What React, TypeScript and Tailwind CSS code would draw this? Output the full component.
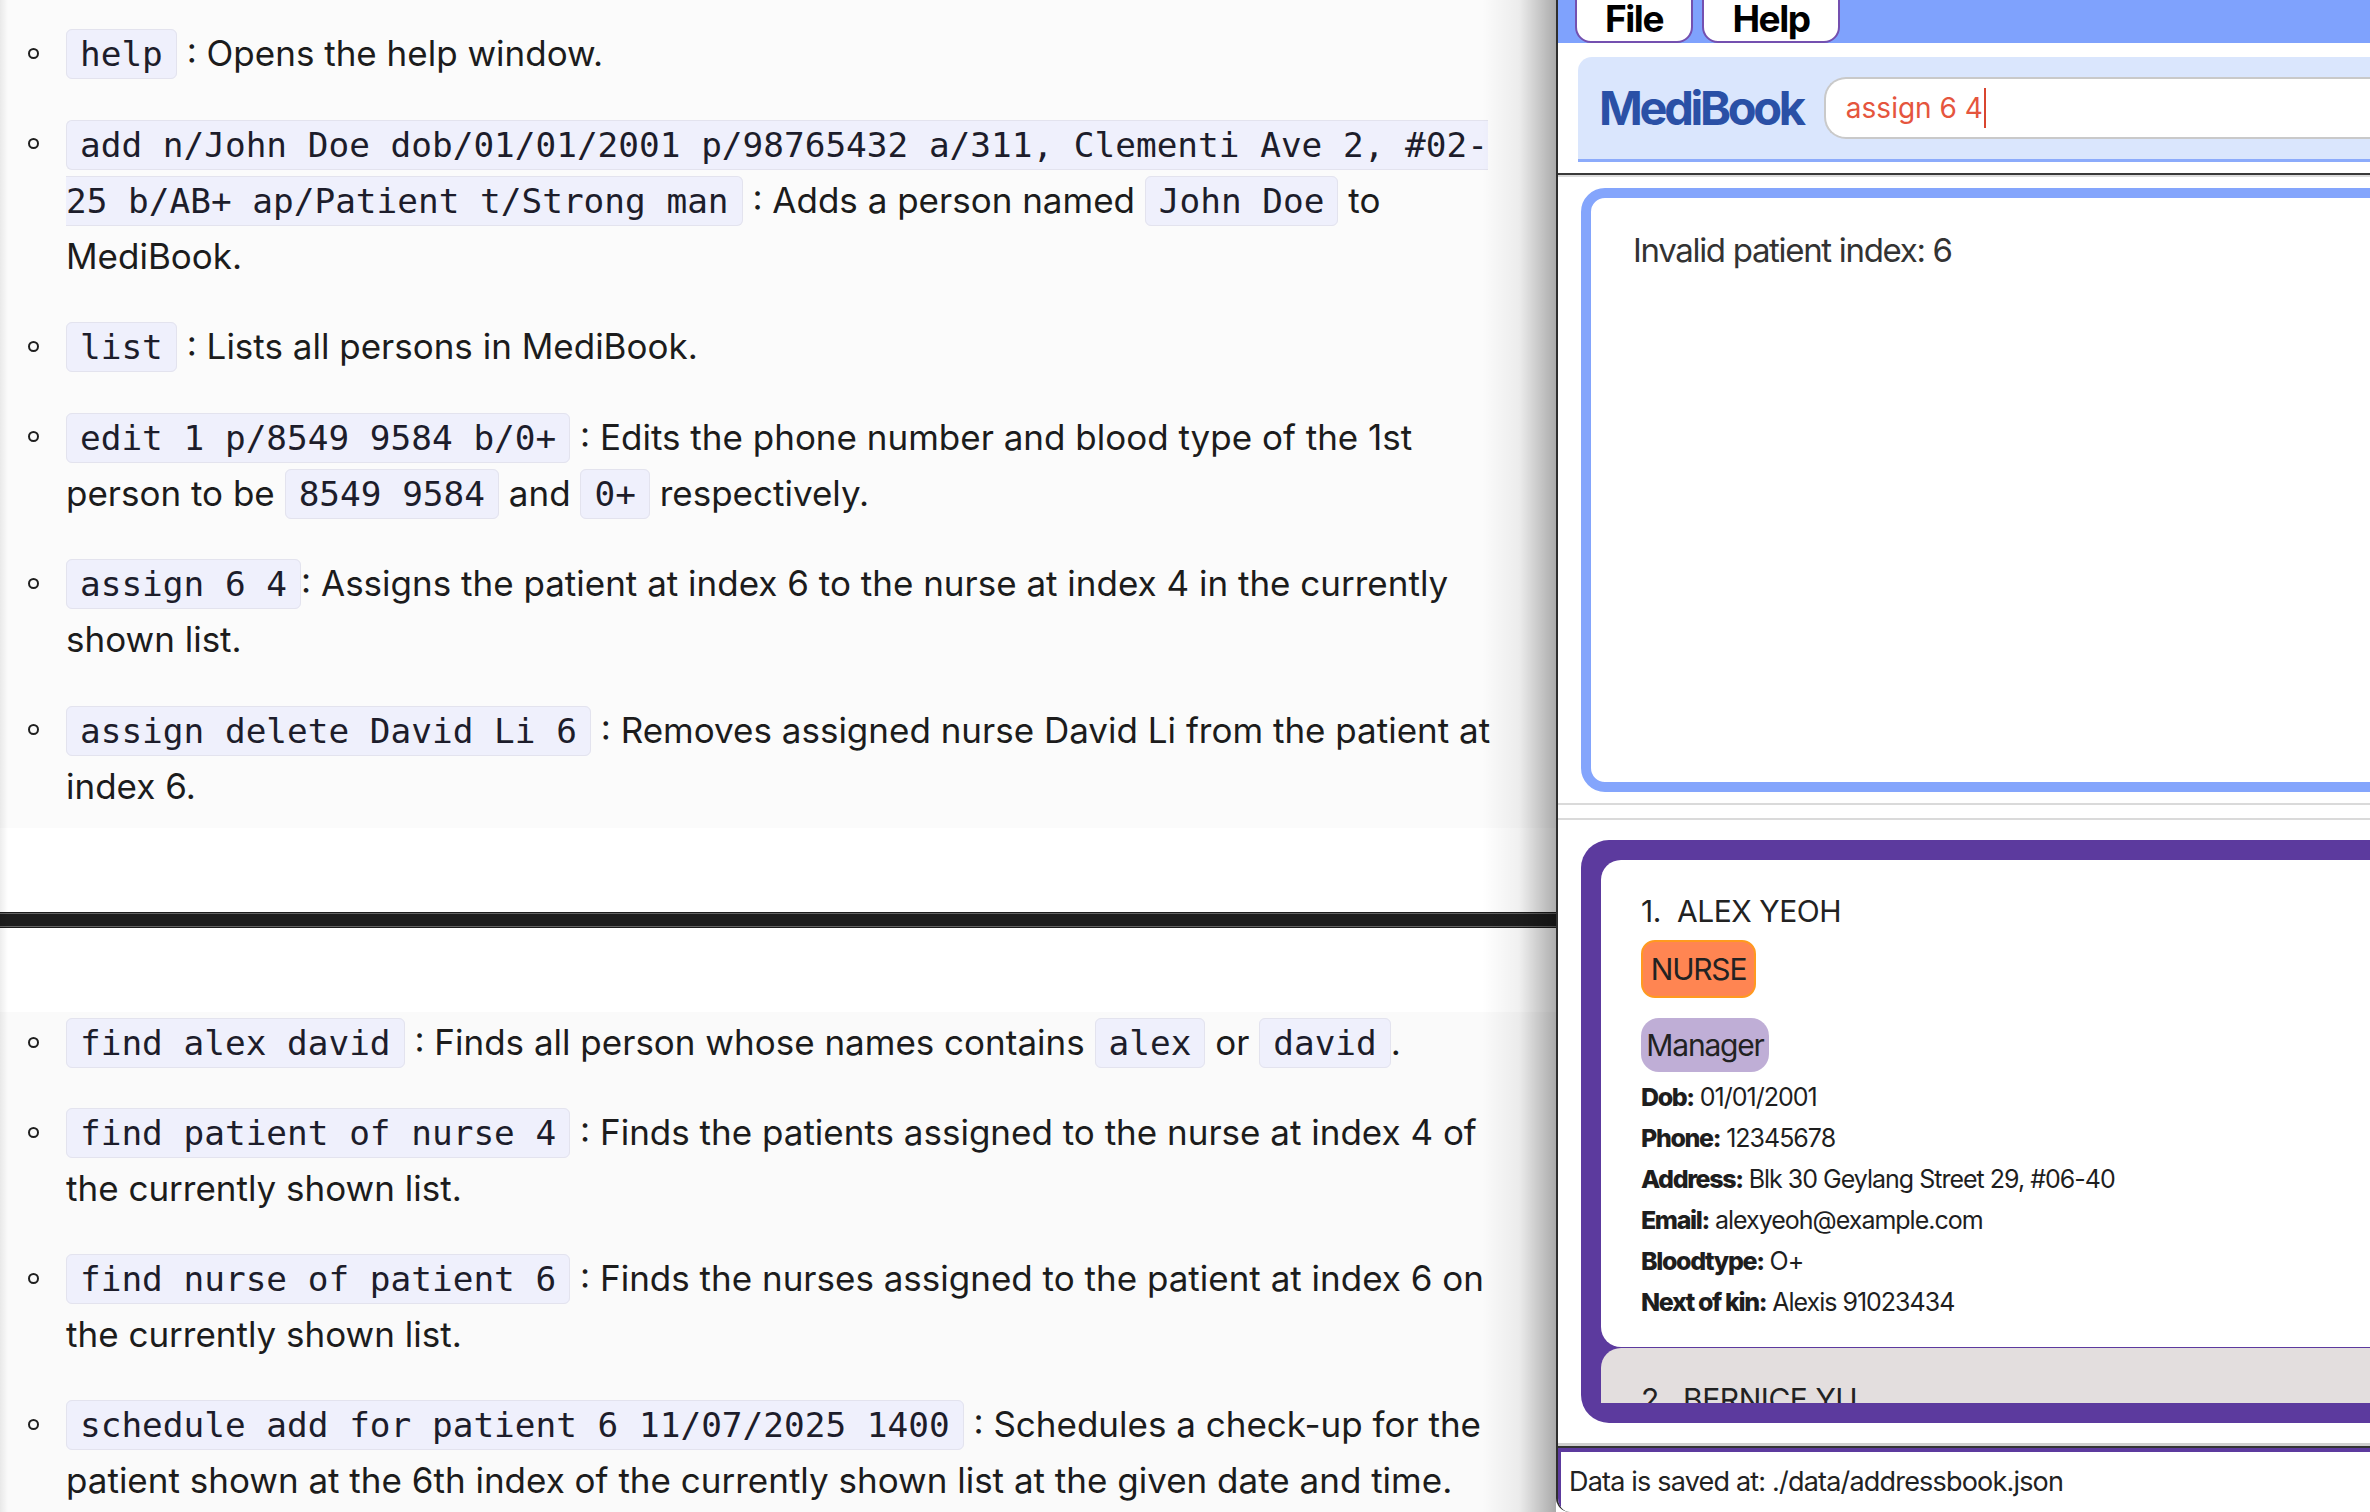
import React from "react";

function Code({ children }: { children: React.ReactNode }) {
  return (
    <code className="font-['DejaVu_Sans_Mono',monospace] text-[34.4px] leading-none tracking-normal text-[#1d1d2b] bg-[#eff0fc] border-[1.5px] border-[#e3e3ee] rounded-[6px] px-[13px] py-[4px]">
      {children}
    </code>
  );
}

function Item({ children, gap }: { children: React.ReactNode; gap?: string }) {
  return (
    <li className={`flex ${gap ?? ""}`}>
      <div className="w-[66px] h-[56px] shrink-0 flex items-center justify-center">
        <span className="w-[11px] h-[11px] rounded-full border-2 border-[#1f1f1f]" />
      </div>
      <div className="whitespace-nowrap">{children}</div>
    </li>
  );
}

function GuidePane() {
  return (
    <div className="relative w-[1556px] shrink-0 h-full bg-white font-['Inter',sans-serif] text-[35px] leading-[56px] text-[#1c1c1c]">
      <section className="h-[828px] bg-[#fbfbfb] pt-[25px]">
        <ul>
          <Item>
            <Code>help</Code> : Opens the help window.
          </Item>
          <Item gap="mt-[34.5px]">
            <Code>
              add n/John Doe dob/01/01/2001 p/98765432 a/311, Clementi Ave 2, #02-
              <br />
              25 b/AB+ ap/Patient t/Strong man
            </Code>{" "}
            : Adds a person named <Code>John Doe</Code> to
            <br />
            MediBook.
          </Item>
          <Item gap="mt-[34.5px]">
            <Code>list</Code> : Lists all persons in MediBook.
          </Item>
          <Item gap="mt-[34.5px]">
            <Code>edit 1 p/8549 9584 b/0+</Code> : Edits the phone number and blood type of the 1st
            <br />
            person to be <Code>8549 9584</Code> and <Code>0+</Code> respectively.
          </Item>
          <Item gap="mt-[34.5px]">
            <Code>assign 6 4</Code>: Assigns the patient at index 6 to the nurse at index 4 in the currently
            <br />
            shown list.
          </Item>
          <Item gap="mt-[34.5px]">
            <Code>assign delete David Li 6</Code> : Removes assigned nurse David Li from the patient at
            <br />
            index 6.
          </Item>
        </ul>
      </section>

      <div className="h-[84px]" />
      <div className="h-[16px] bg-[#1d1d1d] py-[1px]">
        <div className="h-full border-y-[1.5px] border-[#646464]" />
      </div>
      <div className="h-[84px]" />

      <section className="h-[500px] bg-[#fafafa] pt-[2px]">
        <ul>
          <Item>
            <Code>find alex david</Code> : Finds all person whose names contains <Code>alex</Code> or{" "}
            <Code>david</Code>.
          </Item>
          <Item gap="mt-[34px]">
            <Code>find patient of nurse 4</Code> : Finds the patients assigned to the nurse at index 4 of
            <br />
            the currently shown list.
          </Item>
          <Item gap="mt-[34px]">
            <Code>find nurse of patient 6</Code> : Finds the nurses assigned to the patient at index 6 on
            <br />
            the currently shown list.
          </Item>
          <Item gap="mt-[34px]">
            <Code>schedule add for patient 6 11/07/2025 1400</Code> : Schedules a check-up for the
            <br />
            patient shown at the 6th index of the currently shown list at the given date and time.
          </Item>
        </ul>
      </section>

      {/* window shadow falling on the guide */}
      <div className="absolute right-0 top-0 h-full w-[74px] bg-linear-to-r from-[#00000000] via-[#0000000f] to-[#00000052]" />
      <div className="absolute left-0 top-0 h-full w-[8px] bg-linear-to-r from-[#00000012] to-[#00000000]" />
    </div>
  );
}

function Field({ label, value }: { label: string; value: string }) {
  return (
    <div className="h-[41px] leading-[41px] text-[25px] text-[#1e1e1e] tracking-[-0.04em]">
      <span className="font-extrabold tracking-[-0.055em]">{label}</span> {value}
    </div>
  );
}

function AppWindow() {
  return (
    <div className="flex-1 h-full flex flex-col bg-white border-l-2 border-[#2e2e2e] rounded-bl-[14px] overflow-hidden font-['Inter',sans-serif] text-[#222]">
      {/* menu bar */}
      <div className="h-[43px] shrink-0 bg-[#7fa2fd] flex items-end gap-[9px] pl-[17px] overflow-hidden">
        <button className="w-[118px] h-[58px] shrink-0 bg-white border-[2.5px] border-[#7450b0] rounded-[16px] pt-[8px] text-[37px] leading-none font-bold text-black tracking-[-0.04em]">
          File
        </button>
        <button className="w-[138px] h-[58px] shrink-0 bg-white border-[2.5px] border-[#7450b0] rounded-[16px] pt-[8px] text-[37px] leading-none font-bold text-black tracking-[-0.04em]">
          Help
        </button>
      </div>

      {/* command box */}
      <div className="mt-[14px] ml-[20px] h-[105px] shrink-0 bg-[#dae6fd] rounded-tl-[14px] border-b-[3px] border-[#8cabfb] flex items-center pl-[21px] gap-[21px]">
        <span className="text-[47px] font-bold text-[#2a50a6] tracking-[-0.07em]">MediBook</span>
        <div className="flex-1 h-[62px] flex items-center rounded-l-[22px] border-2 border-r-0 border-[#c9c9c9] bg-white pl-[20px] text-[28px] text-[#e5553d]">
          assign 6 4
          <span className="inline-block w-[2px] h-[40px] ml-[1px] bg-[#d9452f]" />
        </div>
      </div>

      <div className="mt-[11px] h-[2px] shrink-0 bg-[#3a3a3a]" />
      <div className="h-[2px] shrink-0 bg-[#dcdcdc]" />

      {/* result display */}
      <div className="mt-[11px] ml-[23px] -mr-[40px] h-[604px] shrink-0 border-[10px] border-[#84a5fc] rounded-[24px] bg-white pl-[42px] pt-[32px]">
        <div className="text-[33px] leading-[40px] text-[#333] tracking-[-0.04em]">Invalid patient index: 6</div>
      </div>

      <div className="mt-[11px] h-[2px] shrink-0 bg-[#dadada]" />
      <div className="mt-[13px] h-[2px] shrink-0 bg-[#dadada]" />

      {/* person list */}
      <div className="mt-[20px] ml-[23px] -mr-[40px] h-[583px] shrink-0 bg-[#5c3a9e] rounded-[28px] p-[20px]">
        <div className="h-full overflow-hidden flex flex-col gap-[1px]">
          <div className="h-[487px] shrink-0 bg-white rounded-l-[20px] pl-[40px] pt-[33px]">
            <div className="text-[30px] leading-[36px] whitespace-pre tracking-[-0.015em]">1.  ALEX YEOH</div>
            <div className="mt-[11px] w-[115px] h-[58px] flex items-center justify-center rounded-[14px] bg-[#ff8552] border-2 border-[#ff9a1f] text-[30px] text-[#222] tracking-[-0.04em]">
              NURSE
            </div>
            <div className="mt-[20px] w-[128px] h-[54px] flex items-center justify-center rounded-[18px] bg-[#bfaed6] text-[30px] text-[#222] tracking-[-0.04em]">
              Manager
            </div>
            <div className="mt-[5px]">
              <Field label="Dob:" value="01/01/2001" />
              <Field label="Phone:" value="12345678" />
              <Field label="Address:" value="Blk 30 Geylang Street 29, #06-40" />
              <Field label="Email:" value="alexyeoh@example.com" />
              <Field label="Bloodtype:" value="O+" />
              <Field label="Next of kin:" value="Alexis 91023434" />
            </div>
          </div>
          <div className="h-[200px] shrink-0 bg-[#e3dede] rounded-tl-[20px] pl-[40px] pt-[33px]">
            <div className="text-[30px] leading-[36px] whitespace-pre tracking-[-0.015em]">2.  BERNICE YU</div>
          </div>
        </div>
      </div>

      {/* status bar */}
      <div className="mt-[20px] h-[3px] shrink-0 bg-[#cfcfcf]" />
      <div className="h-[2px] shrink-0 bg-[#333]" />
      <div className="h-[4px] shrink-0 bg-[#5c3a9e]" />
      <div className="flex-1 border-l-[3px] border-[#5c3a9e] pl-[8px] flex items-center text-[27px] text-[#222] tracking-[-0.03em]">
        Data is saved at: ./data/addressbook.json
      </div>
    </div>
  );
}

export default function App() {
  return (
    <div className="flex w-[2370px] h-[1512px] overflow-hidden bg-white">
      <GuidePane />
      <AppWindow />
    </div>
  );
}
